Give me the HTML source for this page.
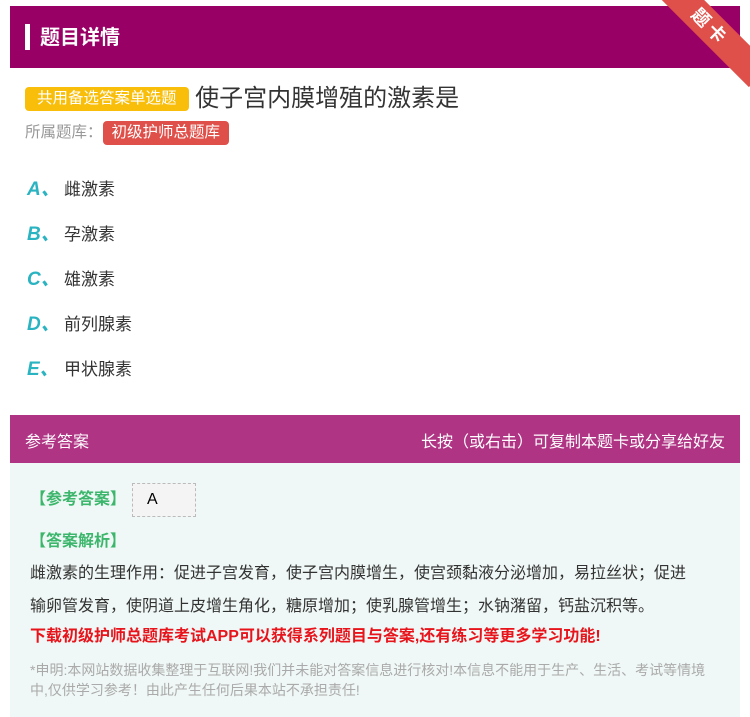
<!DOCTYPE html>
<html><head><meta charset="utf-8"><style>
body{margin:0;width:750px;height:717px;background:#fff;font-family:"Liberation Sans","Noto Sans CJK SC",sans-serif;position:relative;overflow:hidden}
.hd{position:absolute;left:10px;top:6px;width:730px;height:62px;background:#990066}
.hd .bar{position:absolute;left:15px;top:18px;width:5px;height:26px;background:#fff}
.hd span{position:absolute;left:30px;top:15px;color:#fff;font-size:20px;font-weight:bold}
.rib{position:absolute;right:-30px;top:12px;width:140px;height:30px;background:#e0504a;color:#fff;transform:rotate(45deg);text-align:center;font-size:18px;line-height:30px;font-weight:bold;letter-spacing:4px}
.tag{display:inline-block;vertical-align:3px;background:#f8be0a;color:#fff;border-radius:4px;font-size:15.5px;padding:0 12px;height:24px;line-height:24px}
.q{position:absolute;left:25px;top:78px;font-size:24px;color:#333}
.lib{position:absolute;left:25px;top:120px;font-size:15.5px;color:#999}
.lib b{display:inline-block;font-weight:normal;background:#e0504a;color:#fff;border-radius:4px;padding:0 9px;height:24px;line-height:24px}
.opt{position:absolute;left:27px;font-size:17px;color:#333}
.opt i{color:#2ab3c1;font-weight:bold;font-size:19px;display:inline-block;width:37px}
.ah{position:absolute;left:10px;top:415px;width:730px;height:48px;background:#b03484;color:#fff;font-size:16px}
.ah .l{position:absolute;left:15px;top:13px}.ah .r{position:absolute;right:15px;top:13px}
.ab{position:absolute;left:10px;top:463px;width:730px;height:254px;background:#eff8f6}
.g{color:#3cb66c;font-weight:bold;font-size:16px;position:absolute;left:20px}
.p{position:absolute;left:20px;width:668px;font-size:16px;color:#333;line-height:33px}
</style></head><body>
<div class="hd"><div class="bar"></div><span>题目详情</span></div>
<div class="rib">题卡</div>
<div class="q"><span class="tag">共用备选答案单选题</span> 使子宫内膜增殖的激素是</div>
<div class="lib">所属题库：<b>初级护师总题库</b></div>
<div class="opt" style="top:174px"><i>A、</i>雌激素</div>
<div class="opt" style="top:219px"><i>B、</i>孕激素</div>
<div class="opt" style="top:264px"><i>C、</i>雄激素</div>
<div class="opt" style="top:309px"><i>D、</i>前列腺素</div>
<div class="opt" style="top:354px"><i>E、</i>甲状腺素</div>
<div class="ah"><span class="l">参考答案</span><span class="r">长按（或右击）可复制本题卡或分享给好友</span></div>
<div class="ab">
<div class="g" style="top:22px">【参考答案】</div>
<div style="position:absolute;left:122px;top:20px;width:62px;height:32px;background:#f4f4f4;border:1px dashed #bbb;font-size:16px;line-height:32px;text-indent:14px">A</div>
<div class="g" style="top:64px">【答案解析】</div>
<div class="p" style="top:94px">雌激素的生理作用：促进子宫发育，使子宫内膜增生，使宫颈黏液分泌增加，易拉丝状；促进输卵管发育，使阴道上皮增生角化，糖原增加；使乳腺管增生；水钠潴留，钙盐沉积等。</div>
<div class="p" style="top:157px;color:#e8141c;font-weight:bold;width:720px">下载初级护师总题库考试APP可以获得系列题目与答案,还有练习等更多学习功能!</div>
<div class="p" style="top:197px;color:#aaa;font-size:14px;line-height:20px;width:690px">*申明:本网站数据收集整理于互联网!我们并未能对答案信息进行核对!本信息不能用于生产、生活、考试等情境中,仅供学习参考！由此产生任何后果本站不承担责任!</div>
</div>
</body></html>
